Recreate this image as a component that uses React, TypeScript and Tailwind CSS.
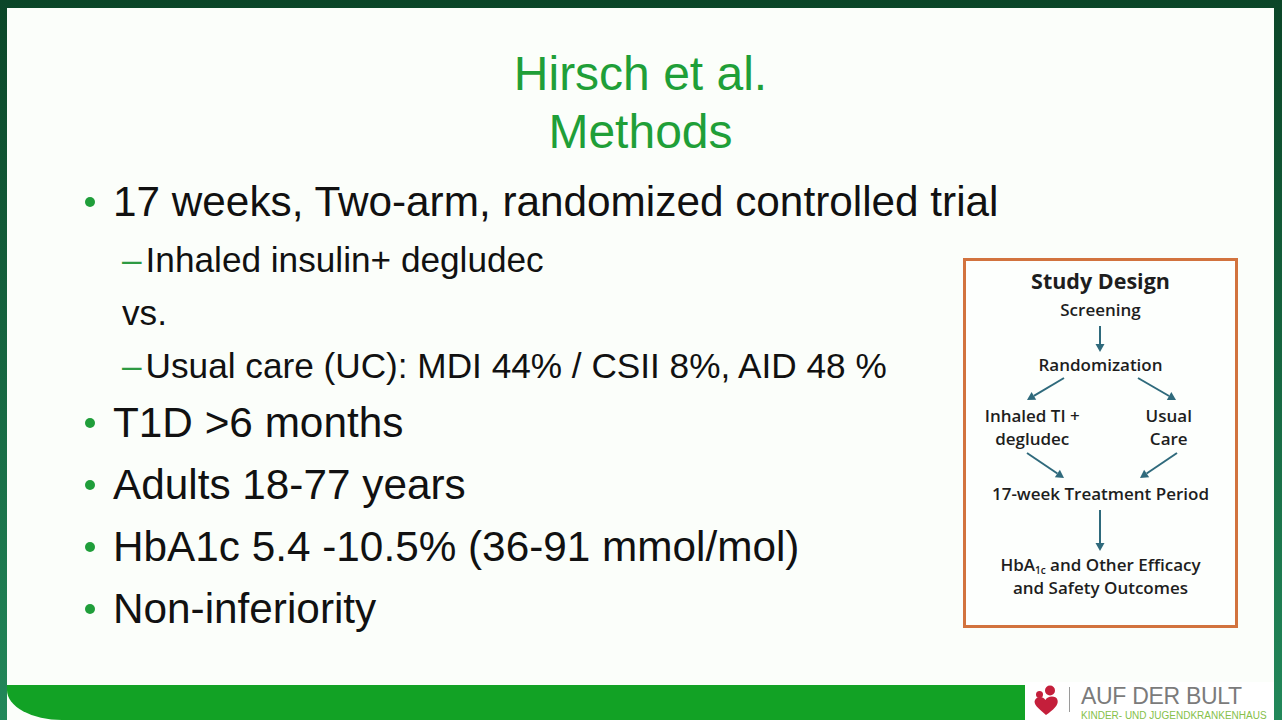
import React from 'react';

const mainItems = ['T1D >6 months', 'Adults 18-77 years', 'HbA1c 5.4 -10.5% (36-91 mmol/mol)', 'Non-inferiority'];

const ARROW = '#2f6a7c';

// simple arrow with a filled head
const Arrow = ({ x1, y1, x2, y2 }: { x1: number; y1: number; x2: number; y2: number }) => {
  const a = Math.atan2(y2 - y1, x2 - x1);
  const len = 8;
  const w = 4.5;
  const bx = x2 - len * Math.cos(a);
  const by = y2 - len * Math.sin(a);
  const p1 = `${bx + w * Math.sin(a)},${by - w * Math.cos(a)}`;
  const p2 = `${bx - w * Math.sin(a)},${by + w * Math.cos(a)}`;
  return (
    <g>
      <line x1={x1} y1={y1} x2={bx} y2={by} stroke={ARROW} strokeWidth={2} />
      <polygon points={`${x2},${y2} ${p1} ${p2}`} fill={ARROW} />
    </g>
  );
};

const MainBullet = ({ children }: { children: React.ReactNode }) => (
  <div className="text-[42.3px] leading-[62px] whitespace-nowrap">
    <span className="inline-block w-[10px] h-[10px] rounded-full bg-[#1f9e3a] mr-[18px] mb-[6px] align-middle" />
    {children}
  </div>
);

const SubBullet = ({ children }: { children: React.ReactNode }) => (
  <div className="pl-[37px] text-[35.2px] leading-[53px] whitespace-nowrap">
    <span className="text-[#2d9a42] mr-[4px]">–</span>
    {children}
  </div>
);

const StudyDesign = () => (
  <div className="shrink-0 w-[275px] h-[370px] mt-[87px] mr-[36px] border-[3px] border-[#d2733e] bg-[#fdfffd] text-[#1e1e1e] font-['Open_Sans',sans-serif] flex flex-col items-center">
    <div className="pt-[7px] text-[21.5px] leading-[26px] font-bold">Study Design</div>
    <div className="mt-[5px] text-[17px] leading-[22px] font-semibold">Screening</div>
    <svg width="269" height="33" className="block">
      <Arrow x1={134} y1={5} x2={134} y2={31} />
    </svg>
    <div className="text-[17px] leading-[22px] font-semibold">Randomization</div>
    <svg width="269" height="28" className="block">
      <Arrow x1={98} y1={2} x2={61} y2={24} />
      <Arrow x1={172} y1={2} x2={210} y2={24} />
    </svg>
    <div className="w-full grid grid-cols-2 text-[17px] leading-[23px] font-semibold text-center">
      <div className="pr-[2px]">Inhaled TI +<br />degludec</div>
      <div className="pl-[2px]">Usual<br />Care</div>
    </div>
    <svg width="269" height="33" className="block">
      <Arrow x1={61} y1={3} x2={98} y2={28} />
      <Arrow x1={211} y1={3} x2={174} y2={28} />
    </svg>
    <div className="text-[17px] leading-[22px] font-semibold whitespace-nowrap">17-week Treatment Period</div>
    <svg width="269" height="48" className="block">
      <Arrow x1={134} y1={5} x2={134} y2={46} />
    </svg>
    <div className="text-[17px] leading-[23px] font-semibold text-center whitespace-nowrap">
      HbA<sub className="text-[10px]">1c</sub> and Other Efficacy<br />and Safety Outcomes
    </div>
  </div>
);

const Logo = () => (
  <div className="w-[249px] h-[38px] bg-white flex items-start pt-[3px] pl-[8px]">
    <svg width="26" height="31" viewBox="0 0 26 31" className="shrink-0">
      <circle cx="17" cy="5.5" r="5" fill="#c41f3b" />
      <circle cx="6.5" cy="9.5" r="3.5" fill="#c41f3b" />
      <path d="M13 30 C 5 23, 0 19, 2 15 C 4 11, 10 11, 12.5 15 C 14 11, 23 10, 24.5 15 C 26 20, 20 25, 13 30 Z" fill="#c41f3b" />
    </svg>
    <div className="w-px h-[25px] bg-[#9a9a9a] ml-[10px] mr-[11px] mt-[2px]" />
    <div className="font-['Liberation_Sans',sans-serif] leading-none">
      <div className="text-[23px] text-[#7b7b7b] tracking-[-0.3px]">AUF DER BULT</div>
      <div className="text-[10px] text-[#86bf4a] mt-[3px] whitespace-nowrap">KINDER- UND JUGENDKRANKENHAUS</div>
    </div>
  </div>
);

export default function App() {
  return (
    <div className="w-[1282px] h-[720px] bg-gradient-to-b from-[#0b4628] to-[#22885a] pt-[8px] pl-[7px] pr-[8px] overflow-hidden">
      <div className="w-full h-full bg-[#fbfefa] flex flex-col font-['Liberation_Sans',Arial,sans-serif] text-[#111]">
        <div className="pt-[37px] text-center text-[48px] leading-[58px] text-[#1f9f38]">
          Hirsch et al.<br />Methods
        </div>
        <div className="mt-[10px] flex items-start">
          <div className="flex-1 min-w-0 pl-[78px]">
            <MainBullet>17 weeks, Two-arm, randomized controlled trial</MainBullet>
            <SubBullet>Inhaled insulin+ degludec</SubBullet>
            <div className="pl-[37px] text-[35.2px] leading-[53px]">vs.</div>
            <SubBullet>Usual care (UC): MDI 44% / CSII 8%, AID 48 %</SubBullet>
            {mainItems.map((t) => (
              <MainBullet key={t}>{t}</MainBullet>
            ))}
          </div>
          <StudyDesign />
        </div>
        <div className="mt-auto flex items-end">
          <div className="flex-1 h-[35px] bg-[#12a225] rounded-bl-[55px_30px]" />
          <Logo />
        </div>
      </div>
    </div>
  );
}
